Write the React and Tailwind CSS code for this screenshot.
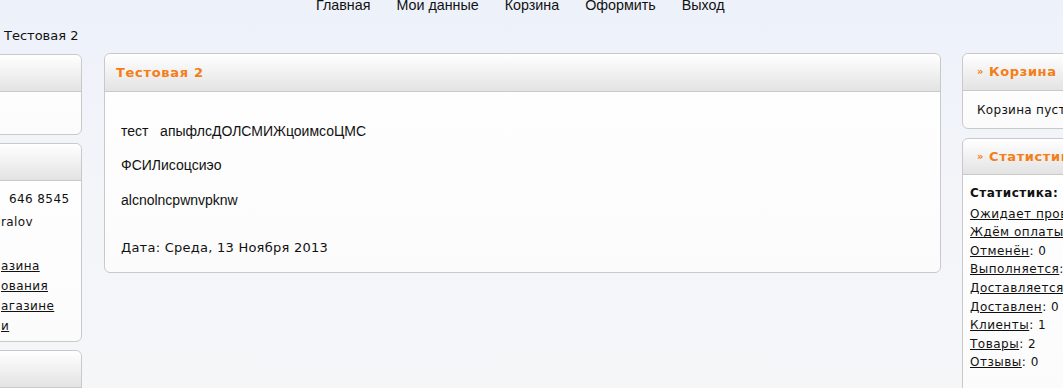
const tahoma = { fontFamily: '"DejaVu Sans", Verdana, sans-serif' };
const arial = { fontFamily: '"Liberation Sans", Arial, sans-serif' };

function Panel({ title, className = '', headerClass = 'h-[37px]', children }) {
  return (
    <div className={`rounded-[6px] border border-[#c9c9c9] bg-gradient-to-b from-white to-[#fbfbfb] overflow-hidden ${className}`}>
      <div className={`${headerClass} flex items-center border-b border-[#c9c9c9] bg-gradient-to-b from-white to-[#e3e3e3] rounded-t-[6px]`}>
        {title}
      </div>
      {children}
    </div>
  );
}

const navItems = ['Главная', 'Мои данные', 'Корзина', 'Оформить', 'Выход'];

const stats = [
  ['Ожидает проверки', '0'],
  ['Ждём оплаты', '0'],
  ['Отменён', '0'],
  ['Выполняется', '0'],
  ['Доставляется', '0'],
  ['Доставлен', '0'],
  ['Клиенты', '1'],
  ['Товары', '2'],
  ['Отзывы', '0'],
];

export default function App() {
  return (
    <div className="w-[1063px] h-[388px] overflow-hidden bg-gradient-to-b from-[#edf1fa] via-[#f3f5f9] to-[#f5f6f8] text-[#111]" style={tahoma}>
      {/* top menu */}
      <div className="h-[14px] -mt-[4px] flex pl-[316px] gap-[26px] text-[14.3px] leading-[18px] text-[#111]" style={arial}>
        {navItems.map((n) => (
          <span key={n}>{n}</span>
        ))}
      </div>

      {/* breadcrumb */}
      <div className="h-[43px] pl-[4px] pt-[18px] text-[13px] leading-[16px]">Тестовая 2</div>

      <div className="flex items-start">
        {/* left column (clipped) */}
        <div className="w-[82px] shrink-0 overflow-hidden">
          <div className="w-[190px] -ml-[108px] flex flex-col gap-[8px]">
            <Panel className="h-[81px] mt-[1px]" headerClass="h-[37px]" />
            <Panel className="h-[199px]" headerClass="h-[37px]">
              <div className="pl-[108px] pt-[10px] text-[12px] leading-[16px] tracking-[0.4px] whitespace-nowrap">
                <div className="h-[23px] pl-[8px]">646 8545</div>
                <div className="h-[44px]">ralov</div>
                <div className="flex flex-col gap-[4px]">
                  <a className="underline">азина</a>
                  <a className="underline">ования</a>
                  <a className="underline">агазине</a>
                  <a className="underline">и</a>
                </div>
              </div>
            </Panel>
            <Panel className="h-[80px]" headerClass="h-[37px]" />
          </div>
        </div>

        {/* center */}
        <div className="ml-[22px] w-[837px] shrink-0">
          <Panel
            className="h-[220px]"
            headerClass="h-[38px]"
            title={<span className="pl-[11px] text-[13px] tracking-[0.7px] font-bold text-[#f57d16]">Тестовая 2</span>}
          >
            <div className="px-[16px] pt-[31px] text-[14px] leading-[16px]">
              <p style={arial}>тест&nbsp;&nbsp; апыфлсДОЛСМИЖцоимсоЦМС</p>
              <p className="mt-[18px]" style={arial}>ФСИЛисоцсиэо</p>
              <p className="mt-[19px]" style={arial}>alcnolncpwnvpknw</p>
              <p className="mt-[32px] text-[13px] tracking-[0.25px]">Дата: Среда, 13 Ноября 2013</p>
            </div>
          </Panel>
        </div>

        {/* right column (clipped by window) */}
        <div className="ml-[21px] w-[200px] shrink-0 flex flex-col gap-[9px]">
          <Panel
            className="h-[76px]"
            headerClass="h-[37px]"
            title={
              <span className="pl-[14px] text-[13px] tracking-[0.6px] font-bold text-[#f57d16] whitespace-nowrap">
                <span className="text-[10px] mr-[5px] align-[1px]">»</span>Корзина
              </span>
            }
          >
            <div className="pl-[14px] pt-[11px] text-[12px] leading-[16px] tracking-[0.3px] whitespace-nowrap">Корзина пуста</div>
          </Panel>
          <Panel
            className="h-[260px]"
            headerClass="h-[36px]"
            title={
              <span className="pl-[14px] text-[13px] tracking-[0.6px] font-bold text-[#f57d16] whitespace-nowrap">
                <span className="text-[10px] mr-[5px] align-[1px]">»</span>Статистика
              </span>
            }
          >
            <div className="pl-[7px] pt-[9px] text-[12px] leading-[18.6px] tracking-[0.5px] whitespace-nowrap">
              <div className="font-bold mb-[2px]">Статистика:</div>
              {stats.map(([k, v]) => (
                <div key={k}>
                  <a className="underline">{k}</a>: {v}
                </div>
              ))}
            </div>
          </Panel>
        </div>
      </div>
    </div>
  );
}
